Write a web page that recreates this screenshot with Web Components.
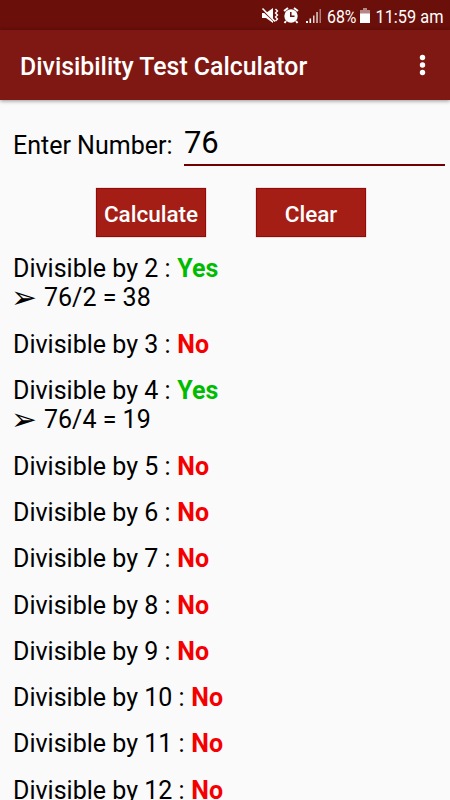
<!DOCTYPE html>
<html lang="en"><head><meta charset="utf-8"><title>Divisibility Test Calculator</title>
<style>html,body{margin:0;height:800px;overflow:hidden;background:#fafafa;font-family:Roboto,sans-serif;color:#000}</style></head><body>
<calc-app></calc-app>
<script>
const make=(name,html)=>customElements.define(name,class extends HTMLElement{constructor(){super();this.attachShadow({mode:'open'}).innerHTML=html;}});
make('status-bar',`<style>:host{display:flex;height:30px;background:#6a0f0a;color:#fff;justify-content:flex-end;box-sizing:border-box;font-family:Roboto,sans-serif}svg{display:block}</style>
<svg width="190" height="30" viewBox="260 0 190 30" fill="#fff" font-size="18">
<path d="M262 13h4l7-5v15l-7-5h-4z"/><path d="M262 10l13 12" stroke="#6a0f0a" stroke-width="1.4"/><path d="M262.500 8.500l12.500 13" stroke="#fff" stroke-width="1.6"/>
<path d="M275.500 9l2 2-2 2 2 2-2 2 2 2-2 2" fill="none" stroke="#fff" stroke-width="1.4"/>
<circle cx="291" cy="16" r="6.700"/><path d="M284 11l4-3M294 8l4 3M286 21l-1.500 2M296 21l1.500 2" stroke="#fff" stroke-width="2"/><path d="M290.800 12v4.300h3.700" fill="none" stroke="#6a0f0a" stroke-width="1.5"/>
<path d="M306 21h2v2h-2zM309.500 18.500h1.600V23h-1.600z"/><path d="M313 15.500h1.500V23H313zM316.300 12h1.500v11h-1.500z" opacity=".8"/><path d="M319.500 9h1.500v14h-1.500z" opacity=".45"/>
<text x="327" y="22.500" textLength="29.500" lengthAdjust="spacingAndGlyphs">68%</text>
<path d="M363 8h4v2h3v4h-10v-4h3z" opacity=".5"/><path d="M360 13.500h10V23h-10z"/>
<text x="375.500" y="22.500" textLength="68" lengthAdjust="spacingAndGlyphs">11:59 am</text></svg>`);
make('app-bar',`<style>:host{display:flex;height:70px;background:#7f1812;color:#fff;align-items:center;justify-content:space-between;padding:3px 18px 0 20px;box-sizing:border-box;font:500 24.85px Roboto,sans-serif;box-shadow:0 1px 4px rgba(0,0,0,.42)}svg{display:block;margin-top:-4px}</style><slot></slot><svg width="20" height="24" fill="#fff"><circle cx="10.500" cy="4.500" r="2.700"/><circle cx="10.500" cy="12" r="2.700"/><circle cx="10.500" cy="19.500" r="2.700"/></svg>`);
make('number-field',`<style>:host{display:flex;padding:20px 5px 0 13px;font-size:25px;height:66px;box-sizing:border-box}label{width:171px;padding-top:10.500px;line-height:30px}.value{flex:1;font-size:31px;line-height:45px;height:44px;border-bottom:2px solid #720000;letter-spacing:-.1px}</style><label><slot></slot></label><div class="value"><slot name="value"></slot></div>`);
make('calc-button',`<style>:host{display:flex;width:110px;height:49px;box-sizing:border-box;align-items:center;justify-content:center;background:#a51e16;color:#fff;border:1px solid #930a08;font:500 22.500px Roboto,sans-serif;padding-top:3px;box-shadow:0 0 1px rgba(80,0,0,.6)}</style><slot></slot>`);
customElements.define('divisibility-row',class extends HTMLElement{connectedCallback(){const n=this.getAttribute('number'),q=this.getAttribute('quotient');
this.attachShadow({mode:'open'}).innerHTML=`<style>:host{display:block;font-size:25px;line-height:29.3px;margin-bottom:17px;white-space:nowrap}div{height:29.3px}b{color:${q?'#00bc00':'#f50000'};margin-left:.6px}.work{display:flex}i{font-style:normal;font-size:31px;width:31px;margin-left:-2px;padding-right:2px}</style><div>Divisible by ${n} : <b>${q?'Yes':'No'}</b></div>${q?`<div class="work"><i>➢</i><span>76/${n} = ${q}</span></div>`:''}`;}});
make('calc-app',`<style>:host{display:block}.buttons{display:flex;justify-content:center;gap:50px;padding:22px 0 0 12px}.results{padding:17.200px 13px 0}</style><status-bar></status-bar><app-bar>Divisibility Test Calculator</app-bar>
<number-field>Enter Number:<span slot="value">76</span></number-field>
<div class="buttons"><calc-button>Calculate</calc-button><calc-button>Clear</calc-button></div>
<div class="results">${[2,3,4,5,6,7,8,9,10,11,12].map(n=>`<divisibility-row number="${n}"${76%n?'':` quotient="${76/n}"`}></divisibility-row>`).join('')}</div>`);
</script></body></html>
